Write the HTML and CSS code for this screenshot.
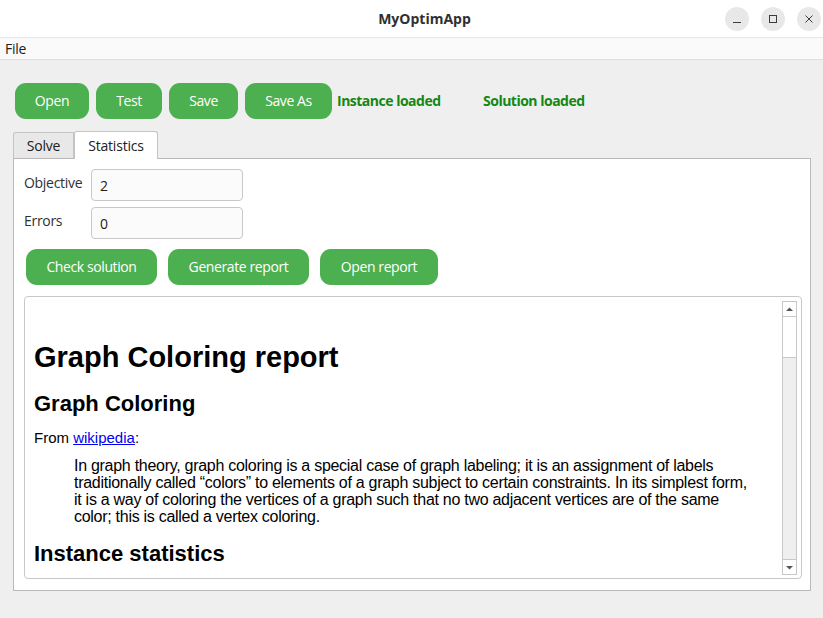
FILE: index.html
```html
<!DOCTYPE html>
<html>
<head>
<meta charset="utf-8">
<link rel="stylesheet" href="styles.css">
</head>
<body>
<div class="window">
  <div class="titlebar">
    <div class="title">MyOptimApp</div>
    <div class="wm-buttons">
      <span class="wm-btn"><svg width="24" height="24" viewBox="0 0 24 24"><path d="M8 15.5h8" stroke="#3c3c3c" stroke-width="1"/></svg></span>
      <span class="wm-btn"><svg width="24" height="24" viewBox="0 0 24 24"><rect x="8.5" y="8.5" width="7" height="7" fill="none" stroke="#3c3c3c" stroke-width="1"/></svg></span>
      <span class="wm-btn"><svg width="24" height="24" viewBox="0 0 24 24"><path d="M8.5 8.5l7 7M15.5 8.5l-7 7" stroke="#3c3c3c" stroke-width="1"/></svg></span>
    </div>
  </div>
  <div class="menubar"><span class="menu-item">File</span></div>
  <div class="main">
    <div class="toolbar">
      <button class="btn btn-open">Open</button>
      <button class="btn btn-test">Test</button>
      <button class="btn btn-save">Save</button>
      <button class="btn btn-saveas">Save As</button>
      <span class="status status-instance">Instance loaded</span>
      <span class="status status-solution">Solution loaded</span>
    </div>
    <div class="tabs">
      <div class="tab">Solve</div>
      <div class="tab tab-active">Statistics</div>
    </div>
    <div class="panel">
      <div class="form-row">
        <label class="form-label">Objective</label>
        <div class="field">2</div>
      </div>
      <div class="form-row">
        <label class="form-label">Errors</label>
        <div class="field">0</div>
      </div>
      <div class="actions">
        <button class="btn btn-check">Check solution</button>
        <button class="btn btn-gen">Generate report</button>
        <button class="btn btn-openrep">Open report</button>
      </div>
      <div class="browser">
        <div class="doc">
          <h1>Graph Coloring report</h1>
          <h2>Graph Coloring</h2>
          <p>From <a href="#">wikipedia</a>:</p>
          <blockquote>In graph theory, graph coloring is a special case of graph labeling; it is an assignment of labels traditionally called “colors” to elements of a graph subject to certain constraints. In its simplest form, it is a way of coloring the vertices of a graph such that no two adjacent vertices are of the same color; this is called a vertex coloring.</blockquote>
          <h2>Instance statistics</h2>
        </div>
        <div class="scrollbar">
          <div class="sb-arrow sb-up"><svg width="13" height="15" viewBox="0 0 13 15"><path d="M3 9h7L6.5 5.5z" fill="#555"/></svg></div>
          <div class="sb-track"><div class="sb-handle"></div></div>
          <div class="sb-arrow sb-down"><svg width="13" height="15" viewBox="0 0 13 15"><path d="M3 6h7L6.5 9.5z" fill="#555"/></svg></div>
        </div>
      </div>
    </div>
  </div>
</div>
</body>
</html>
```
FILE: styles.css
```css
* { box-sizing: border-box; }
html, body { margin: 0; padding: 0; }
body {
  width: 823px;
  height: 618px;
  overflow: hidden;
  background: #efefef;
  font-family: "Open Sans", "Noto Sans", sans-serif;
  color: #303030;
}
.window { width: 823px; height: 618px; display: flex; flex-direction: column; }
.titlebar {
  height: 38px;
  background: #ffffff;
  border-bottom: 1px solid #e6e6e6;
  position: relative;
  display: flex;
  align-items: center;
  justify-content: center;
  padding-left: 26px;
}
.title {
  font-weight: 700;
  font-size: 14px;
  color: #303030;
  letter-spacing: 0;
}
.wm-buttons {
  position: absolute;
  right: 2px;
  top: 7px;
  display: flex;
  gap: 12px;
}
.wm-btn {
  width: 24px;
  height: 24px;
  border-radius: 50%;
  background: #e8e8e8;
  display: block;
}
.wm-btn svg { display: block; }
.menubar {
  height: 22px;
  background: #fafafa;
  border-bottom: 1px solid #dedede;
  display: flex;
  align-items: center;
  padding-left: 5px;
}
.menu-item { font-size: 14px; color: #202020; letter-spacing: -0.3px; }
.main { flex: 1; padding: 23px 12px 0 13px; }
.toolbar { display: flex; align-items: center; height: 36px; padding-left: 2px; }
.btn {
  background: #4caf50;
  color: #ffffff;
  border: none;
  border-radius: 11px;
  height: 36px;
  font-family: "Open Sans", "Noto Sans", sans-serif;
  font-size: 14px;
  letter-spacing: -0.4px;
  padding: 0 0 2px 0;
}
.btn-open { width: 74px; margin-right: 7px; }
.btn-test { width: 66px; margin-right: 7px; }
.btn-save { width: 69px; margin-right: 7px; }
.btn-saveas { width: 87px; margin-right: 5px; }
.status {
  color: #138813;
  font-weight: 700;
  font-size: 14px;
  letter-spacing: -0.5px;
  margin-top: -2px;
}
.status-instance { width: 146px; }
.tabs { display: flex; margin-top: 11px; align-items: flex-end; height: 28px; }
.tab {
  height: 26px;
  width: 61px;
  justify-content: center;
  font-size: 14px;
  letter-spacing: -0.2px;
  color: #202020;
  background: #e8e8e8;
  border: 1px solid #c4c4c4;
  border-bottom: none;
  border-radius: 3px 0 0 0;
  display: flex;
  align-items: center;
  padding-top: 0;
}
.tab-active {
  height: 28px;
  width: 84px;
  background: #ffffff;
  border-radius: 3px 3px 0 0;
  padding-top: 0;
  margin-bottom: -1px;
  position: relative;
  z-index: 1;
}
.panel {
  height: 433px;
  width: 798px;
  background: #ffffff;
  border: 1px solid #b9b9b9;
  padding: 10px 8px 0 10px;
}
.form-row { display: flex; align-items: center; height: 32px; margin-bottom: 6px; }
.form-label { width: 67px; font-size: 14px; color: #303030; letter-spacing: -0.3px; margin-top: -6px; }
.field {
  width: 152px;
  height: 32px;
  border: 1px solid #c8c8c8;
  border-radius: 4px;
  background: #fbfbfb;
  font-size: 14px;
  color: #202020;
  padding: 6px 0 0 8px;
}
.actions { display: flex; gap: 11px; margin: 10px 0 11px 2px; }
.btn-check { width: 131px; }
.btn-gen { width: 141px; }
.btn-openrep { width: 118px; }
.browser {
  height: 283px;
  width: 778px;
  border: 1px solid #c8c8c8;
  border-radius: 4px;
  display: flex;
  overflow: hidden;
}
.doc {
  flex: 1;
  padding: 9px 0 0 9px;
  font-family: "Liberation Sans", Arial, sans-serif;
  color: #000000;
  overflow: hidden;
}
.doc h1 { font-size: 29px; font-weight: 700; margin: 35px 0 18px; line-height: 32px; }
.doc h2 { font-size: 22px; font-weight: 700; margin: 0 0 12px; line-height: 26px; }
.doc p { font-size: 15px; margin: 0 0 10px; line-height: 18px; }
.doc a { color: #0000ee; }
.doc blockquote {
  font-size: 16px;
  line-height: 17px;
  margin: 0 30px 16px 40px;
  letter-spacing: -0.28px;
}
.scrollbar {
  width: 15px;
  margin: 4px 4px 3px 0;
  display: flex;
  flex-direction: column;
  border: 1px solid #c8c8c8;
}
.sb-arrow { height: 15px; background: #ffffff; display: flex; align-items: center; justify-content: center; }
.sb-up { border-bottom: 1px solid #c8c8c8; }
.sb-down { border-top: 1px solid #c8c8c8; }
.sb-track { flex: 1; background: #efefef; }
.sb-handle { height: 41px; background: #ffffff; border-bottom: 1px solid #c8c8c8; }
```
